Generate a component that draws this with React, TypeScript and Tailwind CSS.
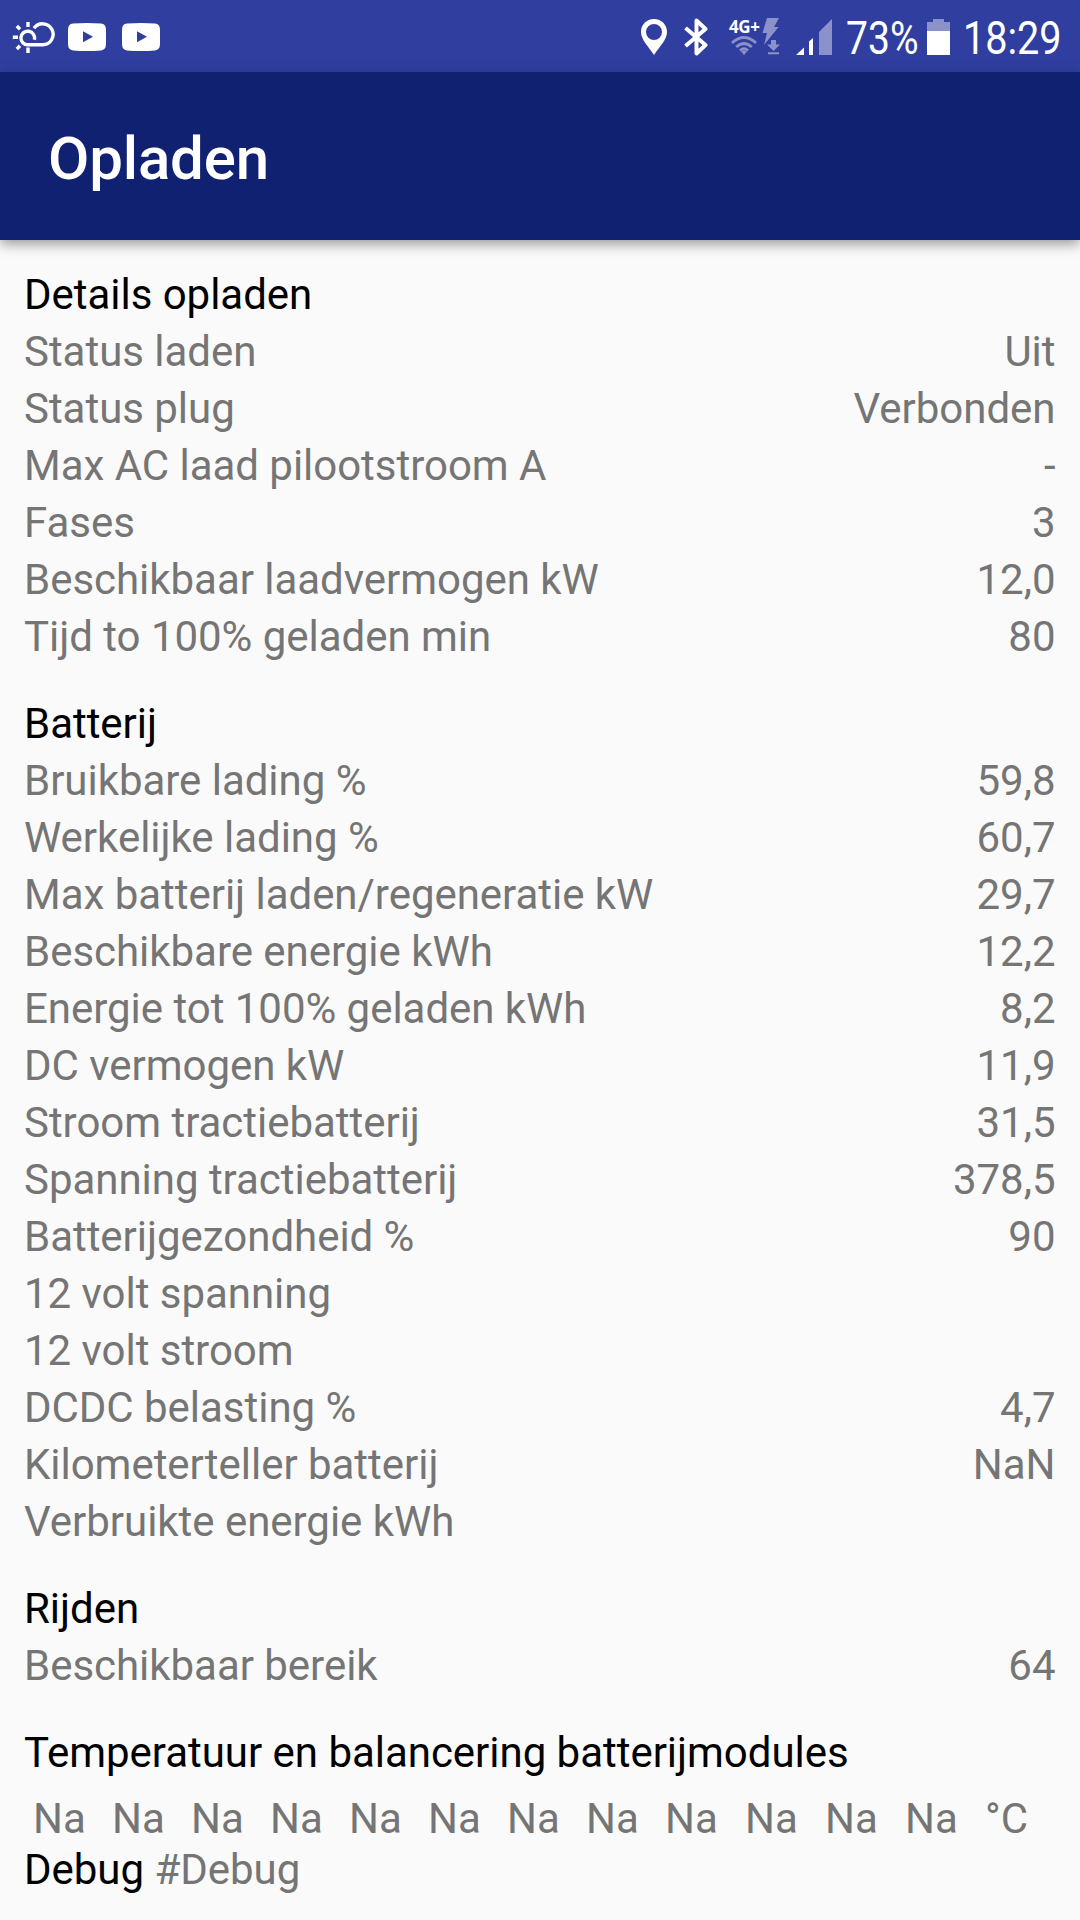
import React from 'react';

interface Row {
  label: string;
  value?: string;
}

interface Section {
  title: string;
  rows: Row[];
}

const sections: Section[] = [
  {
    title: 'Details opladen',
    rows: [
      { label: 'Status laden', value: 'Uit' },
      { label: 'Status plug', value: 'Verbonden' },
      { label: 'Max AC laad pilootstroom A', value: '-' },
      { label: 'Fases', value: '3' },
      { label: 'Beschikbaar laadvermogen kW', value: '12,0' },
      { label: 'Tijd to 100% geladen min', value: '80' },
    ],
  },
  {
    title: 'Batterij',
    rows: [
      { label: 'Bruikbare lading %', value: '59,8' },
      { label: 'Werkelijke lading %', value: '60,7' },
      { label: 'Max batterij laden/regeneratie kW', value: '29,7' },
      { label: 'Beschikbare energie kWh', value: '12,2' },
      { label: 'Energie tot 100% geladen kWh', value: '8,2' },
      { label: 'DC vermogen kW', value: '11,9' },
      { label: 'Stroom tractiebatterij', value: '31,5' },
      { label: 'Spanning tractiebatterij', value: '378,5' },
      { label: 'Batterijgezondheid %', value: '90' },
      { label: '12 volt spanning' },
      { label: '12 volt stroom' },
      { label: 'DCDC belasting %', value: '4,7' },
      { label: 'Kilometerteller batterij', value: 'NaN' },
      { label: 'Verbruikte energie kWh' },
    ],
  },
  {
    title: 'Rijden',
    rows: [{ label: 'Beschikbaar bereik', value: '64' }],
  },
];

const modules = Array.from({ length: 12 }, () => 'Na');

const WeatherIcon = () => (
  <svg width="44" height="36" viewBox="0 0 44 36" fill="none" stroke="white" strokeWidth="3.4">
    <path d="M22.3 20.8 A6.8 6.8 0 1 0 16 25.8 H31 A10.5 10.5 0 1 0 22 9.3" />
    <path d="M16 3 V8 M16 28.5 V34 M0.8 18.2 H6 M4.8 7 L8 10.2 M4.8 30 L8 26.8" />
  </svg>
);

const VideoIcon = () => (
  <svg width="38" height="28" viewBox="0 0 38 28">
    <path
      fill="white"
      fillRule="evenodd"
      d="M5 .6 Q19 -.5 33 .6 Q38 1 38 7 V21 Q38 27 33 27.4 Q19 28.5 5 27.4 Q0 27 0 21 V7 Q0 1 5 .6 Z M15 8.3 V19.2 L25 13.7 Z"
    />
  </svg>
);

const PinIcon = () => (
  <svg width="26" height="36" viewBox="0 0 26 36">
    <path
      fill="white"
      fillRule="evenodd"
      d="M13 0 C5.5 0 0 5.6 0 13 C0 21 8 28 13 36 C18 28 26 21 26 13 C26 5.6 20.5 0 13 0 Z M13 5 A8 8 0 1 1 13 21 A8 8 0 1 1 13 5 Z"
    />
  </svg>
);

const BluetoothIcon = () => (
  <svg width="24" height="38" viewBox="0 0 24 38" fill="none" stroke="white" strokeWidth="4">
    <path strokeLinejoin="round" d="M1.5 10 L21.5 27 L12.5 35.5 V2.5 L21.5 11 L1.5 28" />
  </svg>
);

const NetworkIcon = () => (
  <div className="w-[54px]">
    <div className="h-4 pl-px font-['Noto_Sans',sans-serif] text-[17px] leading-[18px] font-bold tracking-[-0.4px]">4G+</div>
    <svg className="-mt-4 block" width="54" height="38" viewBox="0 0 54 38">
      <g fill="none" stroke="#8b92c9" strokeWidth="2.7">
        <path d="M4 25 Q16 14 28 25" />
        <path d="M8.3 29 Q16 22 23.7 29" />
        <path d="M12 32.5 Q16 29 20 32.5" />
      </g>
      <path d="M13 33.5 Q16 31.5 19 33.5 L16 37 Z" fill="#8b92c9" />
      <path d="M39 0 H51 L46 9 H50.5 L36 27 L39 15 H34.5 Z" fill="#8b92c9" />
      <path d="M43 22 H48 V26.5 H52 L45.5 33 L39 26.5 H43 Z M40 34.3 H51 V36.3 H40 Z" fill="#8b92c9" />
    </svg>
  </div>
);

const SignalIcon = () => (
  <svg width="36" height="36" viewBox="0 0 36 36">
    <path d="M0 36 L8 28.5 V36 Z M13 36 V22.5 L17 19 V36 Z" fill="white" />
    <path d="M23 36 V13 L36 0 V36 Z" fill="#8b92c9" />
  </svg>
);

const BatteryIcon = () => (
  <svg width="23" height="36" viewBox="0 0 23 36">
    <path d="M6 0 H17 V3 H23 V12 H0 V3 H6 Z" fill="#8b92c9" />
    <path d="M0 12 H23 V36 H0 Z" fill="white" />
  </svg>
);

const StatusBar = () => (
  <div className="flex h-[72px] items-center bg-[#303f9f] pt-0.5 pl-3 text-white">
    <WeatherIcon />
    <div className="ml-3 flex gap-4">
      <VideoIcon />
      <VideoIcon />
    </div>
    <div className="ml-auto flex items-center pr-[18px]">
      <PinIcon />
      <div className="ml-[17px]">
        <BluetoothIcon />
      </div>
      <div className="ml-5">
        <NetworkIcon />
      </div>
      <div className="ml-3.5">
        <SignalIcon />
      </div>
      <div className="ml-3.5 w-[81px]">
        <span className="inline-block origin-left scale-x-[0.85] pt-0.5 text-[46px] leading-[70px]">73%</span>
      </div>
      <BatteryIcon />
      <div className="ml-[13px] w-[99px]">
        <span className="inline-block origin-left scale-x-[0.86] pt-0.5 text-[46px] leading-[70px]">18:29</span>
      </div>
    </div>
  </div>
);

const App = () => {
  return (
    <div className="h-[1920px] w-[1080px] overflow-hidden bg-[#fafafa] font-[Roboto,sans-serif] text-[42px] leading-[57px] tracking-[-0.03px] text-[#757575]">
      <StatusBar />

      <header className="flex h-[168px] items-center bg-[#112171] px-12 pt-1.5 shadow-[0_4px_12px_rgba(0,0,0,0.4)]">
        <h1 className="text-[60px] leading-[72px] font-medium tracking-[-0.15px] text-white">Opladen</h1>
      </header>

      <main className="px-6 pt-[26px]">
        {sections.map((section) => (
          <section key={section.title} className="mb-[30px]">
            <h2 className="text-black">{section.title}</h2>
            {section.rows.map((row) => (
              <div key={row.label} className="flex justify-between">
                <span>{row.label}</span>
                <span className="pr-[0.5px]">{row.value}</span>
              </div>
            ))}
          </section>
        ))}

        {/* Battery module temperatures */}
        <section>
          <h2 className="text-black">Temperatuur en balancering batterijmodules</h2>
          <div className="mt-[9px] grid grid-cols-[repeat(8,79px)_repeat(5,80px)]">
            {modules.map((temp, i) => (
              <span key={i} className="pl-[9px]">
                {temp}
              </span>
            ))}
            <span className="pl-[9px]">°C</span>
          </div>
        </section>

        <p className="-mt-1.5">
          <span className="text-black">Debug</span> #Debug
        </p>
      </main>
    </div>
  );
};

export default App;
